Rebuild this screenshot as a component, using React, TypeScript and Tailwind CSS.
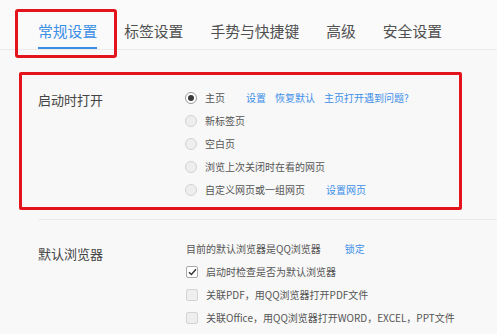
import React from "react";

const font = { fontFamily: '"Noto Sans CJK SC", "Noto Sans", sans-serif' };

function Radio({ checked }: { checked?: boolean }) {
  return checked ? (
    <span className="flex h-[12px] w-[12px] shrink-0 items-center justify-center rounded-full border border-[#9a9a9a] bg-white">
      <span className="h-[6px] w-[6px] rounded-full bg-[#3a3a3a]" />
    </span>
  ) : (
    <span className="h-[12px] w-[12px] shrink-0 rounded-full border border-[#d2d2d2] bg-[#eeeeee]" />
  );
}

function Check({ checked }: { checked?: boolean }) {
  return checked ? (
    <span className="flex h-[12px] w-[12px] shrink-0 items-center justify-center rounded-[2px] border border-[#a8a8a8] bg-white">
      <svg width="9" height="8" viewBox="0 0 9 8">
        <path d="M1 4.2 L3.4 6.5 L8 1.2" fill="none" stroke="#333" strokeWidth="1.4" />
      </svg>
    </span>
  ) : (
    <span className="h-[12px] w-[12px] shrink-0 rounded-[2px] border border-[#d4d4d4] bg-[#eeeeee]" />
  );
}

const tabs = ["常规设置", "标签设置", "手势与快捷键", "高级", "安全设置"];

export default function App() {
  return (
    <div className="relative h-[334px] w-[497px] overflow-hidden bg-[#f8f8f8]" style={font}>
      {/* tab bar */}
      <div className="flex h-[50px] items-end gap-[27px] border-b border-[#ebebeb] bg-[#fafafa] pl-[38px]">
        {tabs.map((t, i) => (
          <div
            key={t}
            className={
              "flex h-[28px] items-start text-[14.8px] leading-[20px] " +
              (i === 0 ? "border-b-2 border-[#3a8ee6] text-[#3a8ee6]" : "text-[#505050]")
            }
          >
            {t}
          </div>
        ))}
      </div>

      {/* section 1 */}
      <div className="flex pb-[18px] pl-[38px] pt-[36px]">
        <div className="w-[147px] pt-[2px] text-[13px] leading-[23px] text-[#444]">启动时打开</div>
        <div className="flex flex-col text-[10px] leading-[23px] text-[#555]">
          <div className="flex h-[23px] items-center gap-[8px]">
            <Radio checked />
            <span>主页</span>
            <span className="ml-[13px] text-[#3d8fe8]">设置</span>
            <span className="ml-[1px] text-[#3d8fe8]">恢复默认</span>
            <span className="ml-[1px] text-[#3d8fe8]">主页打开遇到问题?</span>
          </div>
          <div className="flex h-[23px] items-center gap-[8px]">
            <Radio />
            <span>新标签页</span>
          </div>
          <div className="flex h-[23px] items-center gap-[8px]">
            <Radio />
            <span>空白页</span>
          </div>
          <div className="flex h-[23px] items-center gap-[8px]">
            <Radio />
            <span>浏览上次关闭时在看的网页</span>
          </div>
          <div className="flex h-[23px] items-center gap-[8px]">
            <Radio />
            <span>自定义网页或一组网页</span>
            <span className="ml-[13px] text-[#3d8fe8]">设置网页</span>
          </div>
        </div>
      </div>

      <div className="ml-[38px] h-px bg-[#ebebeb]" />

      {/* section 2 */}
      <div className="flex pl-[38px] pt-[17px]">
        <div className="w-[148px] pt-[5px] text-[13px] leading-[23px] text-[#444]">默认浏览器</div>
        <div className="flex flex-col text-[10px] leading-[23px] text-[#555]">
          <div className="flex h-[23px] items-center">
            <span>目前的默认浏览器是QQ浏览器</span>
            <span className="ml-[24px] text-[#3d8fe8]">锁定</span>
          </div>
          <div className="flex h-[23px] items-center gap-[8px]">
            <Check checked />
            <span>启动时检查是否为默认浏览器</span>
          </div>
          <div className="flex h-[23px] items-center gap-[8px]">
            <Check />
            <span>关联PDF，用QQ浏览器打开PDF文件</span>
          </div>
          <div className="flex h-[23px] items-center gap-[8px]">
            <Check />
            <span>关联Office，用QQ浏览器打开WORD，EXCEL，PPT文件</span>
          </div>
        </div>
      </div>

      {/* red annotation boxes */}
      <div className="pointer-events-none absolute left-[15px] top-[9px] h-[49px] w-[102px] rounded-[3px] border-[3px] border-[#e3141b]" />
      <div className="pointer-events-none absolute left-[19px] top-[72px] h-[138px] w-[443px] rounded-[2px] border-[3px] border-[#e3141b]" />
    </div>
  );
}
